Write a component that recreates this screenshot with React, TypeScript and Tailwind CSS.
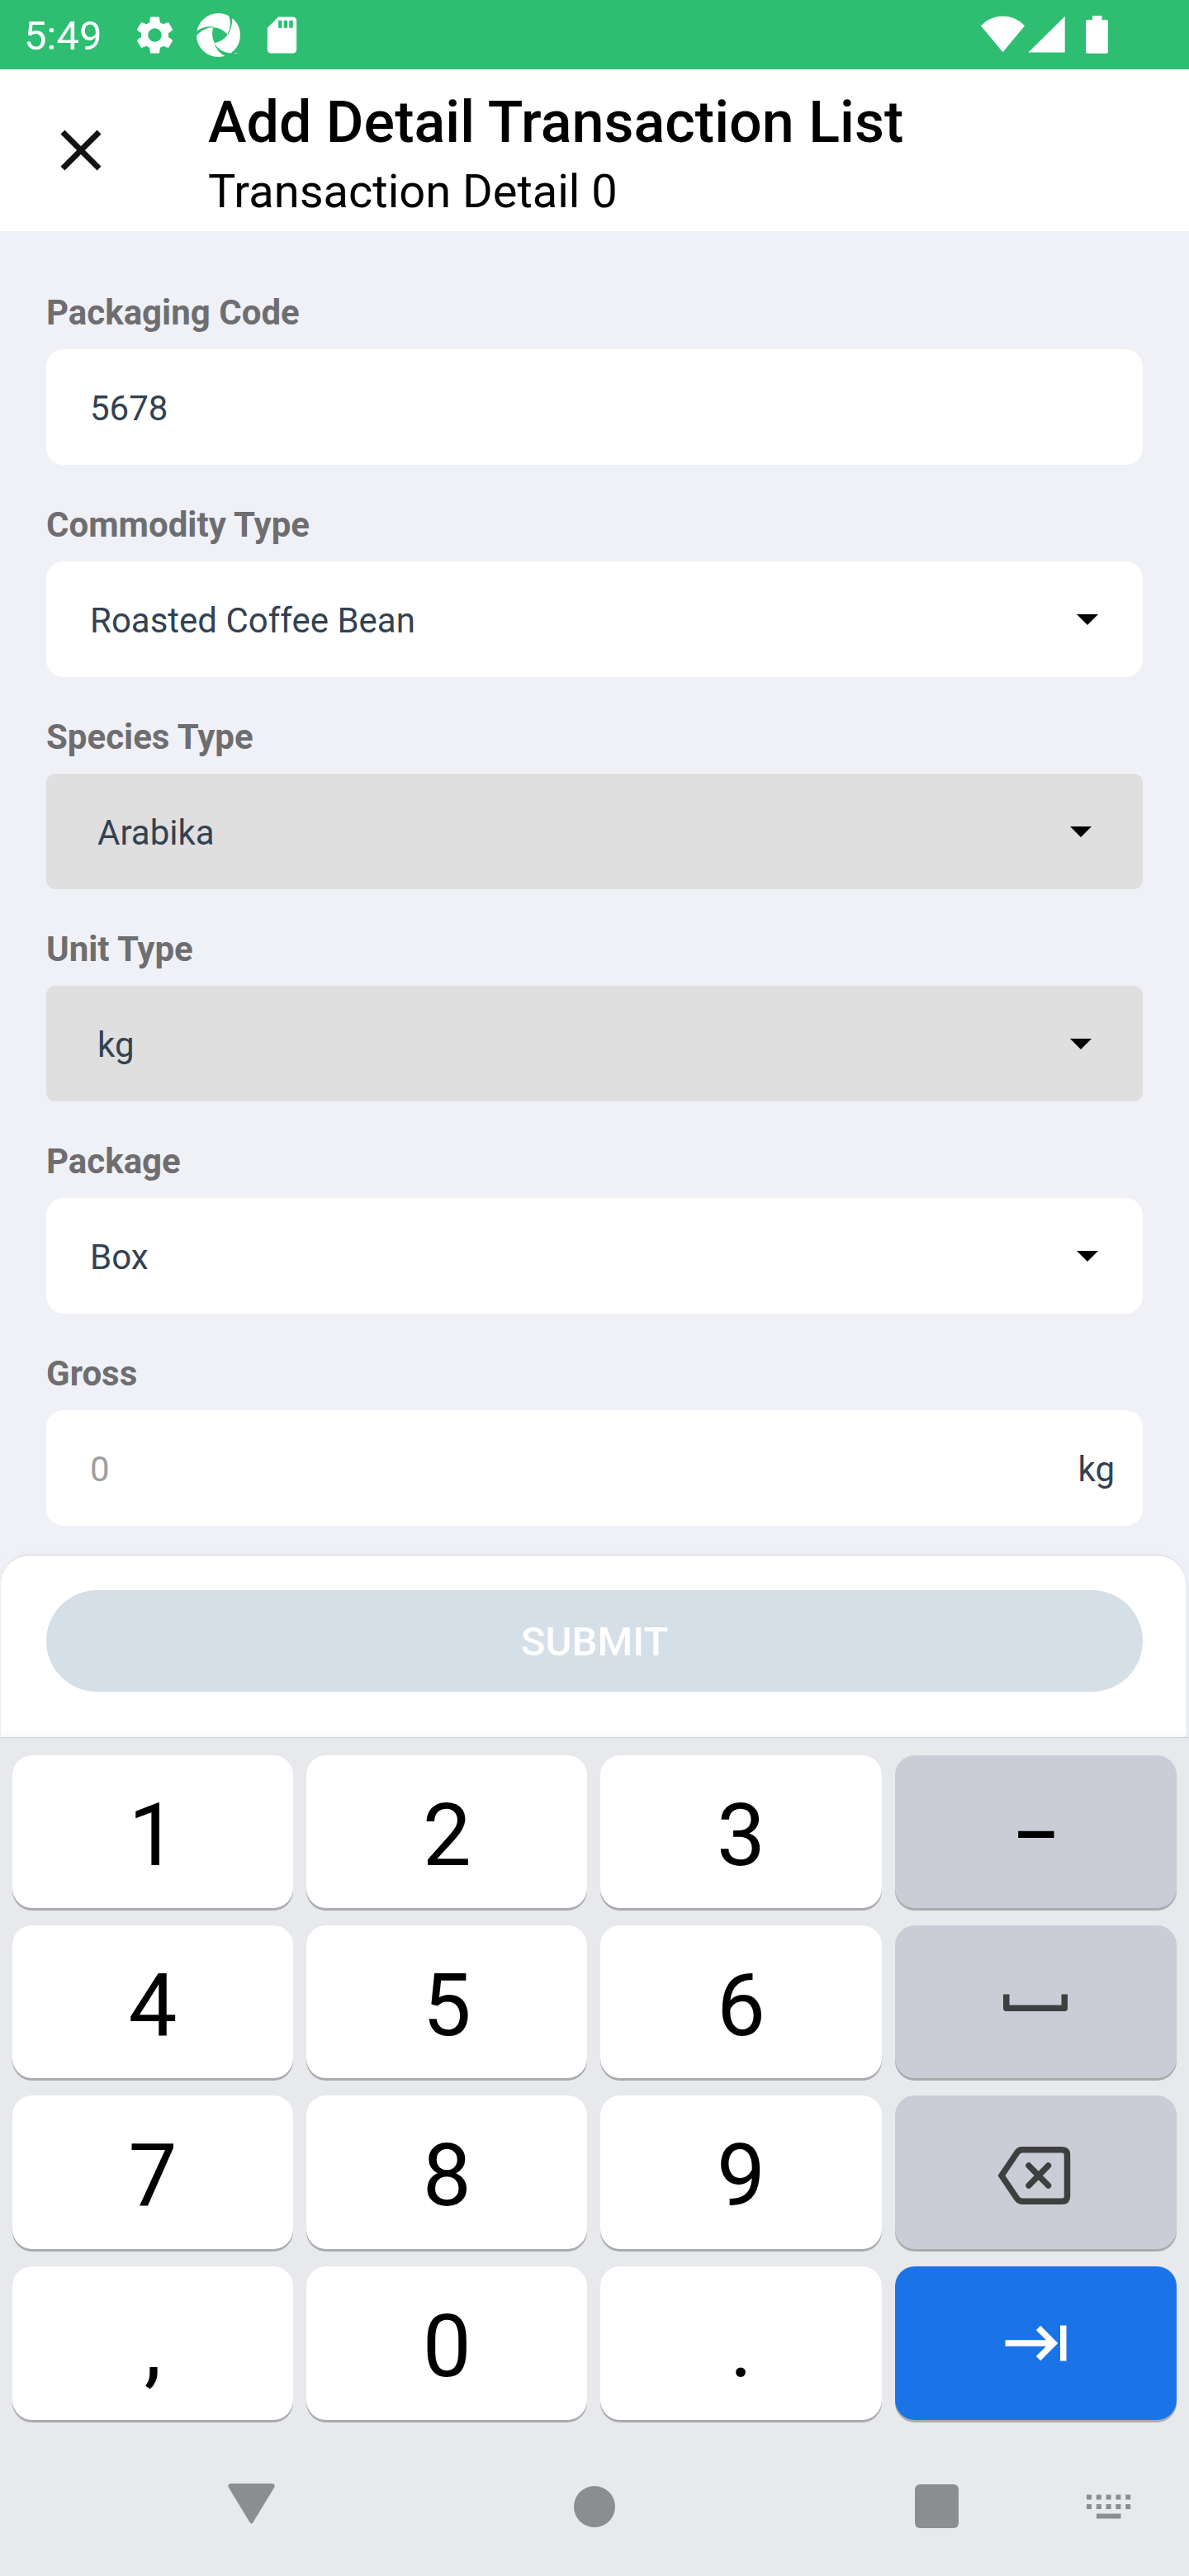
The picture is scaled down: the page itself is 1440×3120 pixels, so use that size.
import type { ReactNode } from "react";

const NAV_GREY = "#8c8d8f";

function StatusBar() {
  return (
    <div className="flex h-[84px] items-start bg-[#2dbe72] text-white">
      <span className="ml-[29px] mt-[15px] w-[132px] text-[49px] leading-[58px]">5:49</span>
      <svg className="mt-4 size-[53px]" viewBox="0 0 24 24" fill="currentColor">
        <path d="M19.43 12.98c.04-.32.07-.64.07-.98s-.03-.66-.07-.98l2.11-1.65c.19-.15.24-.42.12-.64l-2-3.46c-.12-.22-.39-.3-.61-.22l-2.49 1c-.52-.4-1.08-.73-1.69-.98l-.38-2.65C14.46 2.18 14.25 2 14 2h-4c-.25 0-.46.18-.49.42l-.38 2.65c-.61.25-1.17.59-1.69.98l-2.49-1c-.23-.09-.49 0-.61.22l-2 3.46c-.13.22-.07.49.12.64l2.11 1.65c-.04.32-.07.65-.07.98s.03.66.07.98l-2.11 1.65c-.19.15-.24.42-.12.64l2 3.46c.12.22.39.3.61.22l2.49-1c.52.4 1.08.73 1.69.98l.38 2.65c.03.24.24.42.49.42h4c.25 0 .46-.18.49-.42l.38-2.65c.61-.25 1.17-.59 1.69-.98l2.49 1c.23.09.49 0 .61-.22l2-3.46c.12-.22.07-.49-.12-.64l-2.11-1.65zM12 15.7c-2.04 0-3.7-1.66-3.7-3.7s1.66-3.7 3.7-3.7 3.7 1.66 3.7 3.7-1.66 3.7-3.7 3.7z" />
      </svg>
      <svg className="ml-6 mt-4 size-[53px]" viewBox="0 0 159 159">
        <circle cx="79.500" cy="79.500" r="79.500" fill="#fff" />
        <g fill="#2dbe72">
          <path d="M61 51 Q91 53 113 77 Q96 103 65 108 Q52 80 61 51Z" />
          <path d="M-2 68 Q22 45 61 49 L61 51.500 Q26 52 -1 82Z" />
          <path d="M116 5 Q131 42 112 77 L115 77 Q131 48 130 17Z" />
          <path d="M64 108 Q84 143 126 146 L112 160 L104 156 Q75 143 64 108Z" />
        </g>
        <text x="137" y="147" fontSize="7" fontWeight="700" fill="#fff">TM</text>
      </svg>
      <svg className="ml-6 mt-4 size-[53px]" viewBox="0 0 24 24" fill="currentColor">
        <path d="M18 2h-8L4.020 8 4 20c0 1.100.9 2 2 2h12c1.100 0 2-.9 2-2V4c0-1.100-.9-2-2-2zm-6 6h-2V4h2v4zm3 0h-2V4h2v4zm3 0h-2V4h2v4z" />
      </svg>
      <svg className="ml-auto mr-[97px] mt-[19px] h-[46px] w-[155px]" viewBox="1188 19 155 46" fill="currentColor">
        <path d="M1214.500 63.300L1188 31.200A36 36 0 0 1 1241 31.200Z" />
        <path d="M1289.700 19.800V63.500H1245.300Z" />
        <path d="M1323 19h11.500v5h5a2.500 2.500 0 0 1 2.500 2.500v35.700a2.500 2.500 0 0 1-2.500 2.500h-22a2.500 2.500 0 0 1-2.500-2.500V26.500a2.500 2.500 0 0 1 2.500-2.500h5.500z" />
      </svg>
    </div>
  );
}

function Header() {
  return (
    <header className="flex h-[196px] bg-white">
      <svg className="ml-14 mt-14 size-[84px]" viewBox="0 0 24 24" fill="#111214">
        <path d="M19 6.410L17.590 5 12 10.590 6.410 5 5 6.410 10.590 12 5 17.590 6.410 19 12 13.410 17.590 19 19 17.590 13.410 12z" />
      </svg>
      <div className="ml-28 pt-[23px] text-black">
        <h1 className="text-[70px] font-medium leading-[82px] tracking-[0.04px]">Add Detail Transaction List</h1>
        <p className="mt-2.5 text-[56px] leading-[66px]">Transaction Detail 0</p>
      </div>
    </header>
  );
}

function Caret() {
  return (
    <svg className="h-[13px] w-[26px]" viewBox="0 0 26 13">
      <path d="M0 0H26L13 13Z" />
    </svg>
  );
}

type FieldProps = {
  label: string;
  value: string;
  kind?: "text" | "select" | "disabled" | "amount";
};

function Field({ label, value, kind = "text" }: FieldProps) {
  const disabled = kind === "disabled";
  return (
    <div>
      <div className="text-[42px] font-bold leading-[50px] text-[#6e6e71]">{label}</div>
      <div
        className={
          disabled
            ? "mt-[19px] flex h-[140px] items-center justify-between rounded-[11px] bg-[#dfdfdf] pl-[62px] pr-[62px]"
            : "mt-[19px] flex h-[140px] items-center justify-between rounded-[21px] bg-white pl-[53px] pr-[54px]"
        }
      >
        <span
          className={
            kind === "amount"
              ? "pt-[3px] text-[42px] leading-[50px] text-[#9e9e9e]"
              : "pt-[3px] text-[42px] leading-[50px] text-[#334252]"
          }
        >
          {value}
        </span>
        {(kind === "select" || disabled) && <Caret />}
        {kind === "amount" && (
          <span className="-mr-5 pt-[3px] text-[42px] leading-[50px] text-[#334252]">kg</span>
        )}
      </div>
    </div>
  );
}

type KeyProps = { children: ReactNode; tone?: "light" | "grey" | "blue" };

function Key({ children, tone = "light" }: KeyProps) {
  const base = "flex items-center justify-center rounded-[24px] text-[105px] leading-[123px] text-black shadow-[0_3px_0_#a9abae]";
  const tones = {
    light: "bg-white",
    grey: "bg-[#cbcdd6]",
    blue: "bg-[#1b73e8]",
  };
  return <div className={`${base} ${tones[tone]}`}>{children}</div>;
}

function Digit({ children }: { children: ReactNode }) {
  return <span className="pt-[9px]">{children}</span>;
}

function SpaceIcon() {
  return (
    <svg className="mt-[2px] h-[21px] w-[78px]" viewBox="0 0 78 21" fill="none" stroke="#3f3f40" strokeWidth="7.500" strokeLinejoin="round">
      <path d="M3.750 0.500V17.250H74.250V0.500" />
    </svg>
  );
}

function BackspaceIcon() {
  return (
    <svg className="mr-[3px] mt-[7px] h-[70px] w-[89px]" viewBox="0 0 89 70" fill="none" stroke="#3f3f40" strokeWidth="7.500">
      <path d="M5 35L23.500 7.500Q26 3.750 30 3.750H78Q84.500 3.750 84.500 10V60Q84.500 66.250 78 66.250H30Q26 66.250 23.500 62.500Z" />
      <path d="M38 23L61.500 47M61.500 23L38 47" strokeLinecap="round" />
    </svg>
  );
}

function NextIcon() {
  return (
    <svg className="h-[44px] w-[75px]" viewBox="0 0 75 44" fill="none" stroke="#fff" strokeWidth="7.500">
      <path d="M0.500 22H57M40.500 3.500L59 22L40.500 40.500" />
      <path d="M70.750 0.500V43.500" />
    </svg>
  );
}

function Keyboard() {
  return (
    <div className="grid h-[808px] grid-cols-[340fr_340fr_340fr_341fr] grid-rows-[185px_185px_186px_186px] gap-x-4 gap-y-[21px] pl-[15px] pr-[15px]">
      <Key><Digit>1</Digit></Key>
      <Key><Digit>2</Digit></Key>
      <Key><Digit>3</Digit></Key>
      <Key tone="grey"><span className="pt-[9px] text-[87px] font-medium">–</span></Key>
      <Key><Digit>4</Digit></Key>
      <Key><Digit>5</Digit></Key>
      <Key><Digit>6</Digit></Key>
      <Key tone="grey"><SpaceIcon /></Key>
      <Key><Digit>7</Digit></Key>
      <Key><Digit>8</Digit></Key>
      <Key><Digit>9</Digit></Key>
      <Key tone="grey"><BackspaceIcon /></Key>
      <Key><Digit>,</Digit></Key>
      <Key><Digit>0</Digit></Key>
      <Key><Digit>.</Digit></Key>
      <Key tone="blue"><NextIcon /></Key>
    </div>
  );
}

function NavBar() {
  const columns = [0, 1, 2, 3, 4];
  return (
    <nav className="flex items-start pt-[74px]">
      <svg className="ml-[276px] h-[49px] w-[57px]" viewBox="0 0 57 49" fill={NAV_GREY}>
        <path d="M3 0H54Q58 1 56 5L30.500 47Q28.500 50 26.500 47L1 5Q-1 1 3 0Z" />
      </svg>
      <svg className="ml-[362px] mt-[3px] size-[50px]" viewBox="0 0 50 50" fill={NAV_GREY}>
        <circle cx="25" cy="25" r="25" />
      </svg>
      <div className="ml-[363px] mt-[1px] size-[53px] rounded-[6px] bg-[#8c8d8f]" />
      <svg className="ml-[155px] mt-[13px] h-[30px] w-[54px]" viewBox="0 0 54 30" fill={NAV_GREY}>
        {columns.map((c) => (
          <g key={c}>
            <rect x={c * 11.8} y="0.500" width="6" height="6" />
            <rect x={c * 11.8} y="12" width="6" height="6" />
          </g>
        ))}
        <rect x="12" y="23.500" width="29.500" height="6" />
      </svg>
    </nav>
  );
}

export default function App() {
  return (
    <div className="flex h-[3120px] w-[1440px] flex-col overflow-hidden bg-[#f0f1f6] font-[Roboto,sans-serif]">
      <StatusBar />
      <Header />
      <main className="flex h-[1603px] shrink-0 flex-col gap-12 px-14 pt-[74px]">
        <Field label="Packaging Code" value="5678" />
        <Field label="Commodity Type" value="Roasted Coffee Bean" kind="select" />
        <Field label="Species Type" value="Arabika" kind="disabled" />
        <Field label="Unit Type" value="kg" kind="disabled" />
        <Field label="Package" value="Box" kind="select" />
        <Field label="Gross" value="0" kind="amount" />
      </main>
      <section className="ml-px mr-1 h-[221px] shrink-0 rounded-t-[35px] border-t border-[#d3d5d6] bg-white pl-[55px] pr-[52px] pt-[42px] shadow-[0_0_12px_rgba(0,0,0,0.035)]">
        <button className="flex h-[123px] w-full items-center justify-center rounded-full bg-[#d5dfe8] pt-[3px] text-[49px] font-medium leading-[58px] text-white">
          SUBMIT
        </button>
      </section>
      <footer className="relative h-[1016px] shrink-0 border-t border-[#cdcfd1] bg-[#e8e9ed] pt-[21px] shadow-[0_-2px_10px_rgba(0,0,0,0.04)]">
        <Keyboard />
        <NavBar />
      </footer>
    </div>
  );
}
